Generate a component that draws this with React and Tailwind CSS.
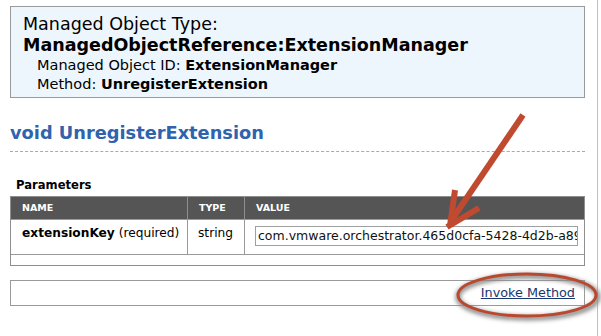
import React from "react";

const font = { fontFamily: '"DejaVu Sans", Verdana, sans-serif' };

export default function App() {
  return (
    <div className="relative flex h-[336px] w-[601px] bg-white text-black" style={font}>
      <div className="w-[597px] pl-[10px] pr-[12px] pt-[6px]">
        {/* object header */}
        <div className="h-[92px] border border-[#9a9a9a] bg-[#eef6fd] pl-[12px] pt-[6px]">
          <div className="text-[17.5px] leading-[22px]">Managed Object Type:</div>
          <div className="text-[17.5px] font-bold leading-[21px]">
            ManagedObjectReference:ExtensionManager
          </div>
          <div className="pl-[14px] text-[14.5px] leading-[19px]">
            Managed Object ID: <b>ExtensionManager</b>
          </div>
          <div className="pl-[14px] text-[14.5px] leading-[19px]">
            Method: <b>UnregisterExtension</b>
          </div>
        </div>

        <h2 className="mt-[24px] text-[17.8px] font-bold leading-[22px] text-[#2f63ae]">
          void UnregisterExtension
        </h2>
        <div className="mt-[7px] border-t border-dashed border-[#aaaaaa]" />

        <div className="mt-[26px] pl-[6px] text-[11.6px] font-bold leading-[14px]">Parameters</div>

        {/* params table */}
        <div className="mt-[4px] border border-[#8e8e8e]">
          <div className="flex h-[22px] items-center bg-[#555555] text-[9.5px] font-bold text-white">
            <div className="w-[176px] pl-[11px]">NAME</div>
            <div className="w-[57px] border-l border-[#8e8e8e] pl-[11px] leading-[22px]">TYPE</div>
            <div className="flex-1 border-l border-[#8e8e8e] pl-[11px] leading-[22px]">VALUE</div>
          </div>
          <div className="flex h-[35px] border-t border-[#9a9a9a] text-[12.2px]">
            <div className="w-[176px] pl-[11px] pt-[4px]">
              <b>extensionKey</b> (required)
            </div>
            <div className="w-[57px] border-l border-[#9a9a9a] pl-[10px] pt-[4px]">string</div>
            <div className="flex-1 border-l border-[#9a9a9a] pl-[10px] pt-[6px]">
              <div className="h-[20px] w-[323px] overflow-hidden whitespace-nowrap border border-[#a0a0a0] pl-[2px] text-[12.5px] leading-[18px] text-[#111]">
                com.vmware.orchestrator.465d0cfa-5428-4d2b-a89c
              </div>
            </div>
          </div>
          <div className="h-[11px] border-t border-[#9a9a9a]" />
        </div>

        <div className="mt-[14px] flex h-[26px] items-center justify-end border border-[#9a9a9a] pr-[9px]">
          <a className="text-[12.8px] text-[#1a3670] underline">Invoke Method</a>
        </div>
      </div>
      <div className="w-px bg-[#aac4e2]" />

      {/* annotations */}
      <svg className="pointer-events-none absolute left-0 top-0" width="601" height="336">
        <defs>
          <filter id="sh" x="-20%" y="-40%" width="140%" height="180%">
            <feGaussianBlur stdDeviation="2" />
          </filter>
        </defs>
        <g stroke="#c04a30" strokeWidth="6" fill="none" strokeLinecap="butt">
          <line x1="523" y1="115" x2="451" y2="221" />
          <line x1="450" y1="226" x2="455" y2="190" />
          <line x1="447" y1="227" x2="479" y2="208" />
        </g>
        <ellipse cx="528" cy="297" rx="70" ry="21" stroke="#888" strokeWidth="5" fill="none" filter="url(#sh)" />
        <ellipse cx="527" cy="295" rx="69" ry="21" stroke="#b9482f" strokeWidth="3" fill="none" />
      </svg>
    </div>
  );
}
